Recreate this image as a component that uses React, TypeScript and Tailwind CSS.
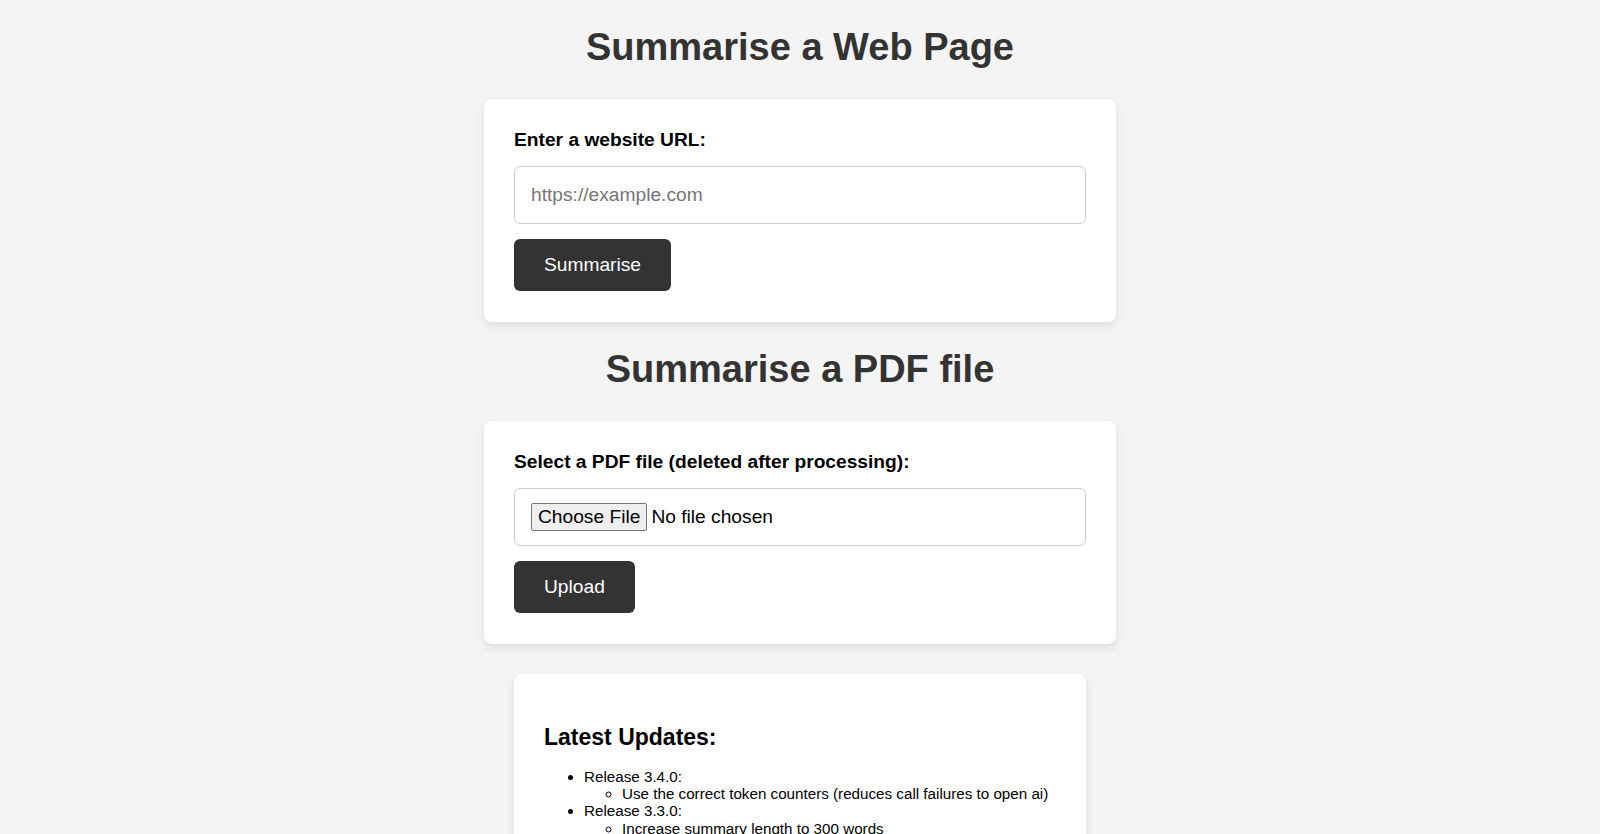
import React from 'react';

const releases = [
  { name: 'Release 3.4.0:', notes: ['Use the correct token counters (reduces call failures to open ai)'] },
  { name: 'Release 3.3.0:', notes: ['Increase summary length to 300 words'] },
  { name: 'Release 3.2.0:', notes: ['Support for PDF uploads'] },
];

export default function App() {
  return (
    <div
      className="min-h-screen bg-[#f4f4f4] flex flex-col items-center pt-[25px] pb-10"
      style={{ fontFamily: '"Liberation Sans", Arial, sans-serif' }}
    >
      {/* Web page form */}
      <h1 className="text-[38px] leading-[44px] font-bold text-[#333] mb-[30px]">Summarise a Web Page</h1>
      <form
        className="w-[632px] bg-white rounded-[8px] px-[30px] pt-[30px] pb-[31px] shadow-[0_4px_10px_rgba(0,0,0,0.1)] mb-[25px]"
        onSubmit={(e) => e.preventDefault()}
      >
        <label className="block text-[19.2px] leading-[22px] font-bold text-black mb-[15px]">
          Enter a website URL:
        </label>
        <input
          type="text"
          placeholder="https://example.com"
          className="block w-full text-[19.2px] leading-[22px] px-[16px] py-[17px] border border-[#ccc] rounded-[6px] placeholder:text-[#757575] text-black mb-[15px] outline-none"
        />
        <button className="bg-[#333] text-white text-[19.2px] leading-[22px] px-[30px] py-[15px] rounded-[6px]">
          Summarise
        </button>
      </form>

      {/* PDF form */}
      <h1 className="text-[38px] leading-[44px] font-bold text-[#333] mb-[30px]">Summarise a PDF file</h1>
      <form
        className="w-[632px] bg-white rounded-[8px] px-[30px] pt-[30px] pb-[31px] shadow-[0_4px_10px_rgba(0,0,0,0.1)] mb-[30px]"
        onSubmit={(e) => e.preventDefault()}
      >
        <label className="block text-[19.2px] leading-[22px] font-bold text-black mb-[15px]">
          Select a PDF file (deleted after processing):
        </label>
        <input
          type="file"
          accept="application/pdf"
          className="block w-full text-[19.2px] leading-[22px] px-[16px] py-[14px] border border-[#ccc] rounded-[6px] text-black mb-[15px] file:bg-[#efefef] file:border file:border-[#767676] file:rounded-[2px] file:px-[6px] file:py-[2px] file:mr-[4px] file:text-black"
        />
        <button className="bg-[#333] text-white text-[19.2px] leading-[22px] px-[30px] py-[15px] rounded-[6px]">
          Upload
        </button>
      </form>

      {/* Updates */}
      <div className="w-[572px] bg-white rounded-[8px] p-[30px] shadow-[0_4px_10px_rgba(0,0,0,0.1)]">
        <h2 className="text-[23px] leading-[26px] font-bold text-black mt-[20px] mb-[18px]">Latest Updates:</h2>
        <ul className="list-disc pl-[40px] text-[15.2px] leading-[17.2px] text-black">
          {releases.map((r) => (
            <li key={r.name}>
              {r.name}
              <ul className="list-[circle] pl-[38px]">
                {r.notes.map((n) => (
                  <li key={n}>{n}</li>
                ))}
              </ul>
            </li>
          ))}
        </ul>
      </div>
    </div>
  );
}
